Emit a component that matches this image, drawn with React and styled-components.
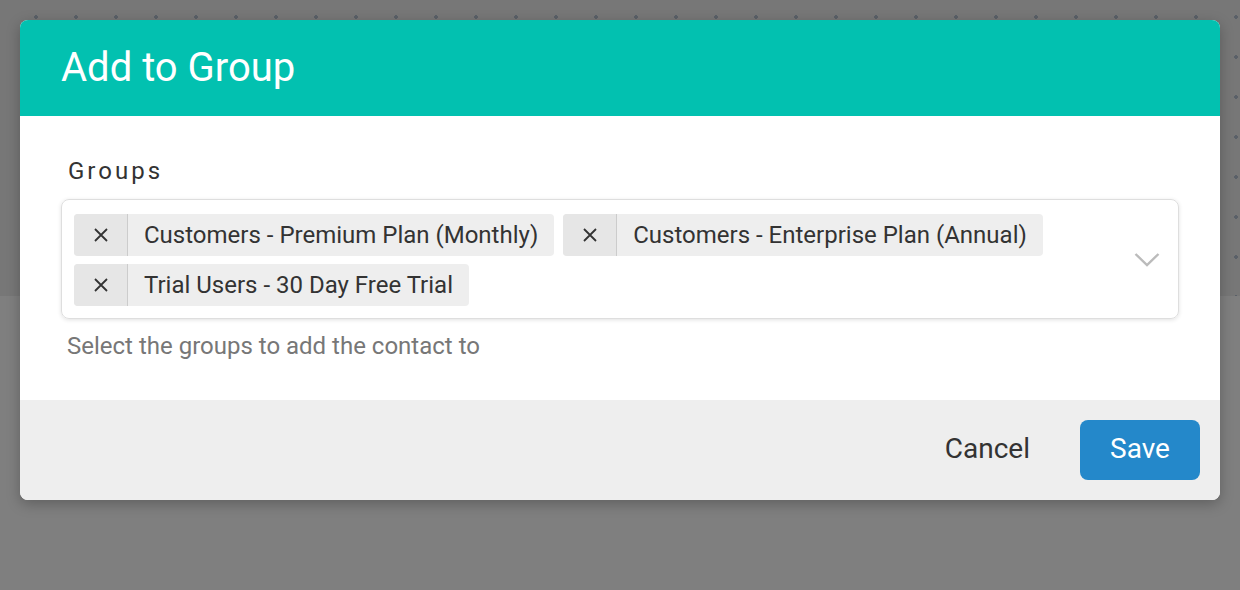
import React from "react";
import styled, { createGlobalStyle } from "styled-components";

const GlobalStyle = createGlobalStyle`
  html, body {
    margin: 0;
    padding: 0;
    font-family: Roboto, "Noto Sans", sans-serif;
  }
`;

const Page = styled.div`
  position: relative;
  width: 1240px;
  height: 590px;
  overflow: hidden;
  background: #ffffff;
`;

const DottedArea = styled.div`
  height: 296px;
  background-color: #eeeeee;
  background-image: radial-gradient(circle, #b4c0d0 1.6px, transparent 2px);
  background-size: 40px 40px;
  background-position: 16px -3px;
`;

const Overlay = styled.div`
  position: absolute;
  inset: 0;
  background: rgba(0, 0, 0, 0.5);
  display: flex;
  align-items: flex-start;
  justify-content: center;
  padding-top: 20px;
`;

const Modal = styled.div`
  width: 1200px;
  border-radius: 8px;
  overflow: hidden;
  background: #fff;
  box-shadow: 0 4px 14px rgba(0, 0, 0, 0.25);
`;

const Header = styled.div`
  height: 96px;
  background: #02c1b0;
  display: flex;
  align-items: center;
  padding: 0 41px;
  box-sizing: border-box;
`;

const Title = styled.h1`
  margin: 0;
  font-weight: 400;
  font-size: 40px;
  line-height: 48px;
  color: #fff;
`;

const Body = styled.div`
  padding: 41px 41px 0;
  height: 284px;
  box-sizing: border-box;
`;

const Label = styled.div`
  font-size: 24px;
  line-height: 28px;
  letter-spacing: 3px;
  color: #333;
  padding-left: 7px;
  margin-bottom: 14px;
`;

const SelectBox = styled.div`
  display: flex;
  align-items: center;
  border-radius: 8px;
  border: 1px solid #dedede;
  box-shadow: 0 1px 4px rgba(0, 0, 0, 0.12);
  padding: 13px 18px 12px 12px;
  min-height: 120px;
  box-sizing: border-box;
`;

const Chips = styled.div`
  flex: 1;
  display: flex;
  flex-wrap: wrap;
  gap: 8px 9px;
`;

const Chip = styled.div`
  display: flex;
  height: 42px;
  border-radius: 4px;
  overflow: hidden;
  background: #eeeeee;
`;

const ChipRemove = styled.span`
  width: 53px;
  display: flex;
  align-items: center;
  justify-content: center;
  background: #e6e6e6;
  border-right: 1px solid #cccccc;
  color: #333;
`;

const ChipLabel = styled.span`
  display: flex;
  align-items: center;
  padding: 0 16px;
  font-size: 24px;
  color: #333;
`;

const Chevron = styled.svg`
  flex: none;
  margin-left: 12px;
`;

const Help = styled.div`
  margin-top: 13px;
  padding-left: 6px;
  font-size: 24px;
  line-height: 28px;
  color: #777;
`;

const Footer = styled.div`
  height: 100px;
  background: #eeeeee;
  display: flex;
  align-items: center;
  justify-content: flex-end;
  padding: 0 20px;
  gap: 50px;
  box-sizing: border-box;
`;

const TextButton = styled.button`
  border: none;
  background: none;
  font-family: inherit;
  font-size: 28px;
  color: #333;
  padding: 0 0 4px;
  cursor: pointer;
`;

const PrimaryButton = styled.button`
  width: 120px;
  height: 60px;
  border: none;
  border-radius: 8px;
  background: #2488ca;
  color: #fff;
  font-family: inherit;
  font-size: 28px;
  padding: 0 0 4px;
  cursor: pointer;
`;

const groups = [
  "Customers - Premium Plan (Monthly)",
  "Customers - Enterprise Plan (Annual)",
  "Trial Users - 30 Day Free Trial",
];

function CrossIcon() {
  return (
    <svg width="16" height="16" viewBox="0 0 16 16">
      <path d="M2 2 L14 14 M14 2 L2 14" stroke="#333" strokeWidth="1.8" />
    </svg>
  );
}

export default function App() {
  return (
    <>
      <GlobalStyle />
      <Page>
        <DottedArea />
        <Overlay>
          <Modal>
            <Header>
              <Title>Add to Group</Title>
            </Header>
            <Body>
              <Label>Groups</Label>
              <SelectBox>
                <Chips>
                  {groups.map((g) => (
                    <Chip key={g}>
                      <ChipRemove>
                        <CrossIcon />
                      </ChipRemove>
                      <ChipLabel>{g}</ChipLabel>
                    </Chip>
                  ))}
                </Chips>
                <Chevron width="26" height="16" viewBox="0 0 26 16">
                  <path d="M1.5 2 L13 13 L24.5 2" fill="none" stroke="#bbb" strokeWidth="2.4" />
                </Chevron>
              </SelectBox>
              <Help>Select the groups to add the contact to</Help>
            </Body>
            <Footer>
              <TextButton>Cancel</TextButton>
              <PrimaryButton>Save</PrimaryButton>
            </Footer>
          </Modal>
        </Overlay>
      </Page>
    </>
  );
}
